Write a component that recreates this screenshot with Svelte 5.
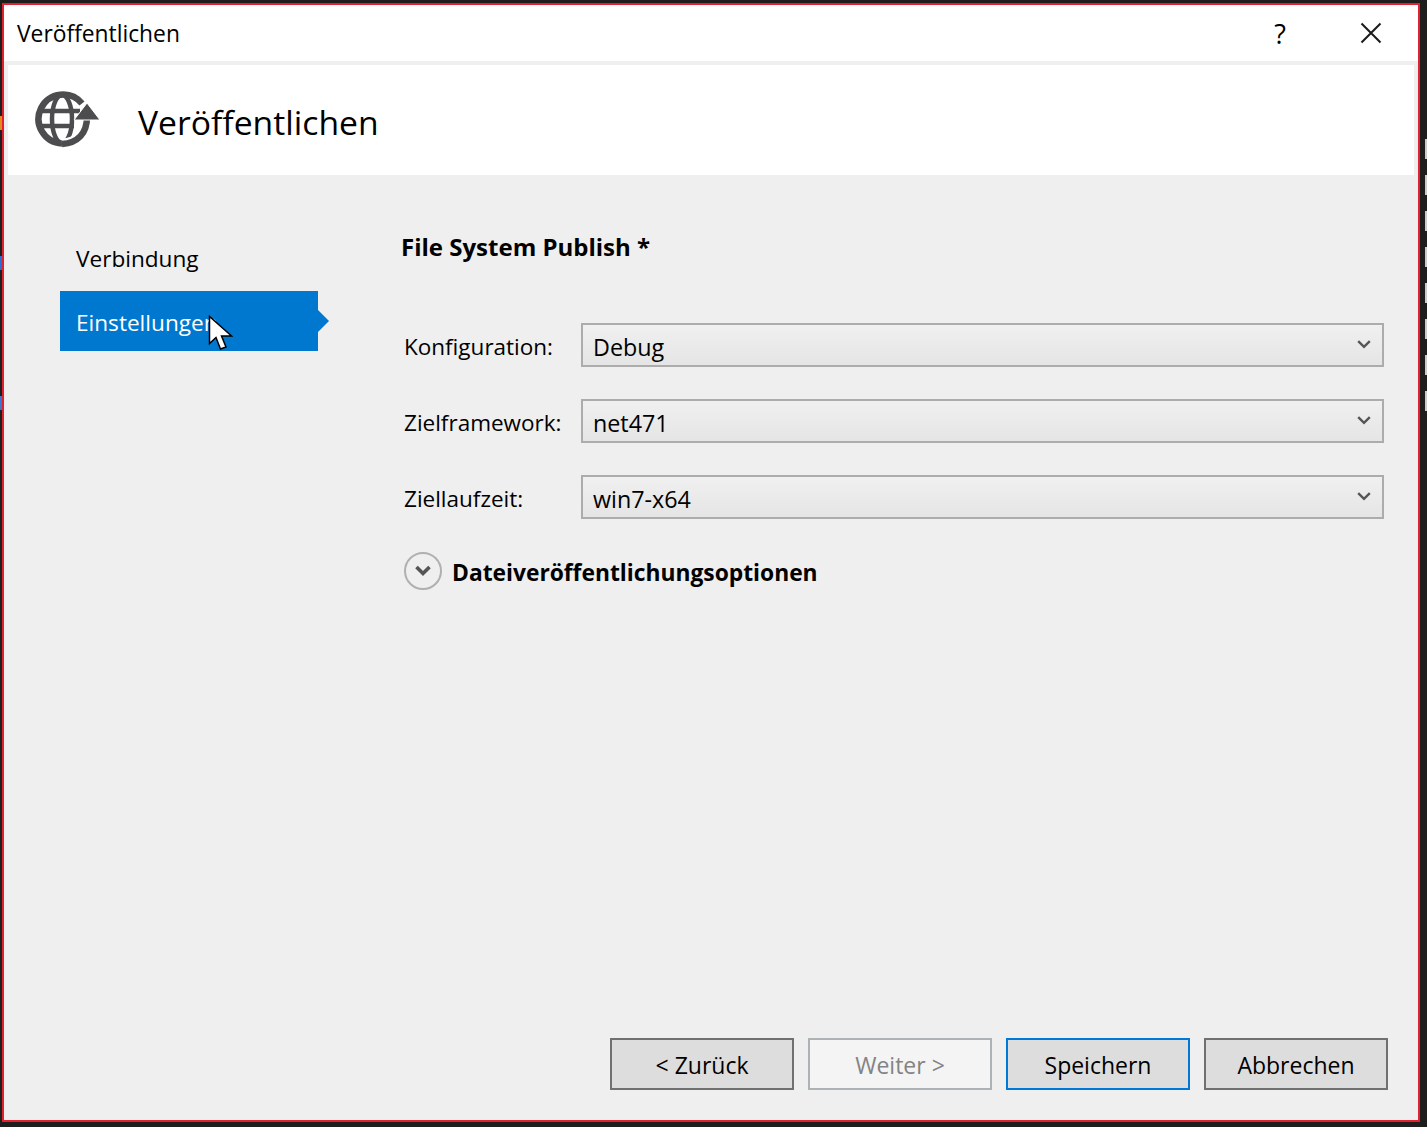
<script>
  const fields = [
    { label: 'Konfiguration:', value: 'Debug' },
    { label: 'Zielframework:', value: 'net471' },
    { label: 'Ziellaufzeit:', value: 'win7-x64' },
  ]
  const buttons = [
    { text: '< Zurück' },
    { text: 'Weiter >', disabled: true },
    { text: 'Speichern', primary: true },
    { text: 'Abbrechen' },
  ]
  const ticks = Array(8).fill(0)
  const leftMarks = ['#e08a20', '#2a6fd0', '#3a78c8']
</script>

<div class="screen">
  <div class="left">
    {#each leftMarks as color}
      <div class="mark" style:background={color}></div>
    {/each}
  </div>
  <div class="window">
    <div class="titlebar">
      <span class="title">Veröffentlichen</span>
      <span class="help">?</span>
      <svg class="close" width="22" height="22" viewBox="0 0 22 22"><path d="M1.5 1.5 20.5 20.5M20.5 1.5 1.5 20.5" stroke="#1a1a1a" stroke-width="2" fill="none"/></svg>
    </div>

    <div class="header">
      <svg class="globe" width="66" height="58" viewBox="0 0 66 58">
        <g fill="none" stroke="#4d4d4f">
          <path d="M48 12.500A24.500 24.500 0 1 0 28 52.500" stroke-width="6.500"/>
          <ellipse cx="28" cy="28" rx="10" ry="24" stroke-width="4.500"/>
          <path d="M5 20H46M5 35H40" stroke-width="4.500"/>
          <path d="M53 26C53 42 44 52 28 53" stroke="#fff" stroke-width="11"/>
          <path d="M53 26C53 42 44 52 28 53" stroke-width="6.500"/>
        </g>
        <path d="M53 12 66 29H40Z" fill="#4d4d4f" stroke="#fff" stroke-width="1"/>
      </svg>
      <h1>Veröffentlichen</h1>
    </div>

    <div class="body">
      <nav class="nav">
        <div class="nav-item">Verbindung</div>
        <div class="nav-item active">Einstellungen</div>
        <svg class="cursor" width="26" height="38" viewBox="0 0 26 38">
          <path d="M1.500 1.500V28.500L8 22.500 12.500 34 18 32 13.500 21H23.500Z" fill="#fff" stroke="#000" stroke-width="1.500"/>
        </svg>
      </nav>

      <main class="content">
        <h2>File System Publish *</h2>
        <div class="fields">
          {#each fields as field}
            <div class="field">
              <span class="label">{field.label}</span>
              <div class="select">
                <span class="value">{field.value}</span>
                <svg width="14" height="9" viewBox="0 0 14 9"><path d="M1.200 1.200 7 6.800 12.800 1.200" fill="none" stroke="#555" stroke-width="2.400"/></svg>
              </div>
            </div>
          {/each}
        </div>
        <div class="expander">
          <span class="round">
            <svg width="18" height="12" viewBox="0 0 18 12"><path d="M2.500 2 9 8.500 15.500 2" fill="none" stroke="#555" stroke-width="3.600"/></svg>
          </span>
          <b>Dateiveröffentlichungsoptionen</b>
        </div>
      </main>
    </div>

    <div class="footer">
      {#each buttons as btn}
        <button class:primary={btn.primary} disabled={btn.disabled}>{btn.text}</button>
      {/each}
    </div>
  </div>
  <div class="side">
    {#each ticks as _}
      <div class="tick"></div>
    {/each}
  </div>
</div>

<style>
:global(body) {
  margin: 0;
  background: #1e1e1e;
}

.screen {
  display: flex;
  box-sizing: border-box;
  width: 1427px;
  height: 1127px;
  padding: 3px 0 5px 0;
  font-family: "Open Sans", sans-serif;
  color: #000;
  overflow: hidden;
}

.left {
  display: flex;
  flex-direction: column;
  gap: 126px;
  flex: none;
  width: 2px;
  padding-top: 113px;
}

.mark {
  height: 14px;
}

.window {
  display: flex;
  flex-direction: column;
  box-sizing: border-box;
  width: 1418px;
  border: 2px solid #e3202f;
  background: #efefef;
}

.side {
  display: flex;
  flex-direction: column;
  align-items: flex-end;
  gap: 16px;
  flex: 1;
  padding-top: 136px;
}

.tick {
  width: 2px;
  height: 20px;
  background: #ccc;
}

.titlebar {
  display: flex;
  align-items: center;
  flex: none;
  height: 56px;
  background: #fff;
  padding-left: 13px;
  font-size: 22.800px;
}

.title {
  flex: 1;
}

.help {
  margin-right: 74px;
  font-size: 27px;
}

.close {
  margin-right: 36px;
}

.header {
  display: flex;
  align-items: center;
  flex: none;
  height: 110px;
  margin: 4px 4px 0;
  background: #fff;
}

.globe {
  margin-left: 26px;
}

h1 {
  margin: 4px 0 0 38px;
  font-size: 33.700px;
  font-weight: 400;
}

.body {
  display: flex;
  flex: 1;
}

.nav {
  position: relative;
  flex: none;
  width: 258px;
  margin: 54px 0 0 56px;
  font-size: 22.600px;
}

.nav-item {
  position: relative;
  box-sizing: border-box;
  height: 60px;
  margin-bottom: 2px;
  padding: 14px 0 0 16px;
}

.active {
  padding-top: 16px;
  background: #0078d0;
  color: #fff;
}

.active::after {
  content: "";
  position: absolute;
  right: -11px;
  top: 19px;
  border-left: 11px solid #0078d0;
  border-top: 11px solid transparent;
  border-bottom: 11px solid transparent;
}

.cursor {
  position: absolute;
  left: 148px;
  top: 86px;
}

.content {
  flex: 1;
  margin-left: 83px;
  margin-right: 34px;
}

h2 {
  margin: 52px 0 0 0;
  height: 40px;
  font-size: 24px;
  font-weight: 700;
  line-height: 40px;
}

.fields {
  display: flex;
  flex-direction: column;
  gap: 32px;
  margin-top: 56px;
}

.field {
  display: flex;
  align-items: center;
  padding-left: 3px;
  font-size: 22.500px;
}

.label {
  flex: none;
  width: 177px;
  padding-top: 3px;
}

.select {
  display: flex;
  align-items: center;
  justify-content: space-between;
  box-sizing: border-box;
  flex: 1;
  height: 44px;
  padding: 0 11px 2px 10px;
  border: 2px solid #acacac;
  background: linear-gradient(#f0f0f0, #e5e5e5);
  font-size: 23.300px;
}

.value {
  padding-top: 5px;
}

.expander {
  display: flex;
  align-items: center;
  gap: 10px;
  margin: 33px 0 0 3px;
  font-size: 22.800px;
}

.expander b {
  padding-top: 2px;
}

.round {
  display: flex;
  align-items: center;
  justify-content: center;
  box-sizing: border-box;
  width: 38px;
  height: 38px;
  border: 2px solid #b0b0b0;
  border-radius: 50%;
}

.footer {
  display: flex;
  justify-content: flex-end;
  gap: 14px;
  flex: none;
  padding: 0 30px 30px 0;
}

button {
  box-sizing: border-box;
  width: 184px;
  height: 52px;
  border: 2px solid #707070;
  border-radius: 0;
  background: #dddddd;
  color: #000;
  font-family: inherit;
  font-size: 23px;
  padding: 2px 0 0;
}

button.primary {
  border-color: #0078d7;
}

button:disabled {
  border-color: #adb2b5;
  background: #f4f4f4;
  color: #838383;
}
</style>
